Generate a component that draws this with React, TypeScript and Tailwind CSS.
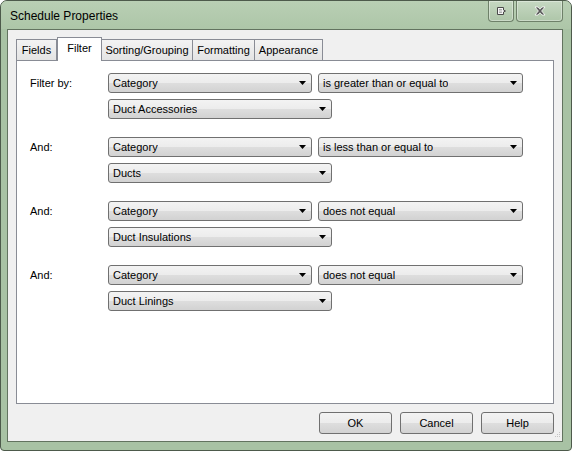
import React from "react";

const font = "font-['Liberation_Sans',Arial,sans-serif]";

function Arrow() {
  return (
    <svg width="7" height="4" viewBox="0 0 7 4" className="shrink-0">
      <polygon points="0,0 7,0 3.5,4" fill="#000" />
    </svg>
  );
}

function Combo({ text, w }: { text: string; w: string }) {
  return (
    <div
      className={`${w} flex h-[20px] items-center justify-between rounded-[3px] border border-[#707070] bg-[linear-gradient(#f3f3f3,#ececec_50%,#dedede_50%,#d2d2d2)] pl-[4px] pr-[5px] text-[11px] text-black`}
    >
      <span className="truncate">{text}</span>
      <Arrow />
    </div>
  );
}

function Btn({ label }: { label: string }) {
  return (
    <button className="flex h-[22px] w-[73px] items-center justify-center rounded-[3px] border border-[#707070] bg-[linear-gradient(#f3f3f3,#ececec_50%,#dedede_50%,#d2d2d2)] text-[11px] text-black">
      {label}
    </button>
  );
}

const groups = [
  { label: "Filter by:", op: "is greater than or equal to", value: "Duct Accessories" },
  { label: "And:", op: "is less than or equal to", value: "Ducts" },
  { label: "And:", op: "does not equal", value: "Duct Insulations" },
  { label: "And:", op: "does not equal", value: "Duct Linings" },
];

const tabs = [
  { label: "Fields", w: "w-[41px]" },
  { label: "Filter", w: "w-[45px]", active: true },
  { label: "Sorting/Grouping", w: "w-[92px]" },
  { label: "Formatting", w: "w-[63px]" },
  { label: "Appearance", w: "w-[69px]" },
];

export default function App() {
  return (
    <div className={`${font} h-[451px] w-[572px] bg-white`}>
      <div className="flex h-full w-full flex-col rounded-t-[7px] rounded-b-[4px] border border-[#4d5a4b] bg-[#a8c2a4]">
        {/* title bar */}
        <div className="flex h-[28px] shrink-0 items-start justify-between rounded-t-[6px] bg-[linear-gradient(#b9cfb4,#adc6a8)]">
          <div className="pl-[9px] pt-[8px] text-[12px] leading-[14px] text-black">Schedule Properties</div>
          <div className="mr-[8px] flex gap-[2px]">
            <div className="flex h-[21px] w-[26px] items-center justify-center rounded-b-[4px] border border-t-0 border-[#6e8069] bg-[linear-gradient(#c6d8c2,#aec6a9)] shadow-[inset_0_0_0_1px_rgba(255,255,255,0.35)]">
              <svg width="11" height="10" viewBox="0 0 11 10">
                <path d="M1.5 1.5h6v2.5l2 1-2 1v2.5h-6z" fill="#f4f4f4" stroke="#4a4a4a" strokeWidth="1" />
                <path d="M3 3.5h3M3 5h3M3 6.5h3" stroke="#9a9a9a" strokeWidth="0.8" />
              </svg>
            </div>
            <div className="flex h-[21px] w-[47px] items-center justify-center rounded-b-[4px] border border-t-0 border-[#6e8069] bg-[linear-gradient(#c6d8c2,#aec6a9)] shadow-[inset_0_0_0_1px_rgba(255,255,255,0.35)]">
              <svg width="12" height="10" viewBox="0 0 12 10">
                <path
                  d="M1 1h3l2 2.2L8 1h3L7.6 5 11 9H8L6 6.8 4 9H1l3.4-4z"
                  fill="#5a5a5a"
                  stroke="#ffffff"
                  strokeWidth="0.8"
                  strokeLinejoin="round"
                />
              </svg>
            </div>
          </div>
        </div>

        {/* client area */}
        <div className="mb-[8px] ml-[6px] mr-[8px] flex flex-1 flex-col border border-[#62735f] bg-[#f0f0f0] pl-[8px] pr-[8px]">
          {/* tabs */}
          <div className="mt-[6px] flex h-[24px] items-end">
            {tabs.map((t) =>
              t.active ? (
                <div
                  key={t.label}
                  className={`${t.w} relative z-10 -mb-px flex h-[24px] items-start justify-center border border-b-0 border-[#898c95] bg-white pt-[4px] text-[11px] leading-[13px]`}
                >
                  {t.label}
                </div>
              ) : (
                <div
                  key={t.label}
                  className={`${t.w} -ml-px flex h-[21px] items-center justify-center border border-b-0 border-[#898c95] bg-[linear-gradient(#f3f3f3,#e4e4e4)] text-[11px] first:ml-0`}
                >
                  {t.label}
                </div>
              )
            )}
          </div>

          {/* panel */}
          <div className="flex h-[344px] flex-col gap-[18px] border border-[#898c95] bg-white pl-[13px] pt-[12px]">
            {groups.map((g, i) => (
              <div key={i} className="flex">
                <div className="flex h-[20px] w-[78px] items-center text-[11px]">{g.label}</div>
                <div className="flex flex-col gap-[6px]">
                  <div className="flex gap-[6px]">
                    <Combo text="Category" w="w-[204px]" />
                    <Combo text={g.op} w="w-[205px]" />
                  </div>
                  <Combo text={g.value} w="w-[224px]" />
                </div>
              </div>
            ))}
          </div>

          {/* buttons */}
          <div className="relative flex flex-1 items-start justify-end gap-[8px] pt-[8px]">
            <Btn label="OK" />
            <Btn label="Cancel" />
            <Btn label="Help" />
            <svg width="8" height="8" viewBox="0 0 8 8" className="absolute bottom-[1px] right-[-7px]">
              <g fill="#c4c4c4">
                <rect x="6" y="0" width="1" height="1" />
                <rect x="4" y="2" width="1" height="1" />
                <rect x="6" y="2" width="1" height="1" />
                <rect x="2" y="4" width="1" height="1" />
                <rect x="4" y="4" width="1" height="1" />
                <rect x="6" y="4" width="1" height="1" />
              </g>
            </svg>
          </div>
        </div>
      </div>
    </div>
  );
}
